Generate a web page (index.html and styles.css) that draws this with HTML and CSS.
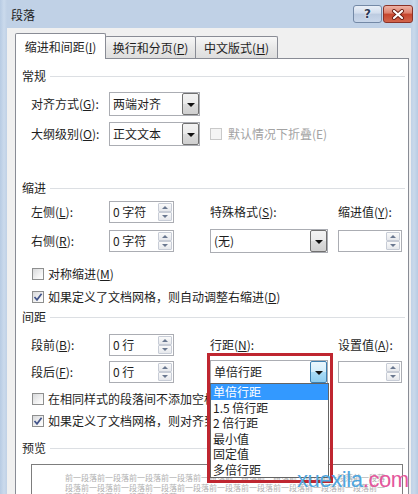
FILE: index.html
```html
<!DOCTYPE html>
<html lang="zh-CN">
<head>
<meta charset="utf-8">
<title>段落</title>
<link rel="stylesheet" href="styles.css">
</head>
<body>
<div class="window">
  <div class="titlebar">
    <span class="title">段落</span>
    <div class="tb-buttons">
      <span class="tb-btn help">?</span>
      <span class="tb-btn close">
        <svg width="14" height="11" viewBox="0 0 14 11"><path d="M3 2 L11 9 M11 2 L3 9" stroke="#6b1d12" stroke-width="4" stroke-linecap="round"/><path d="M3 2 L11 9 M11 2 L3 9" stroke="#ffffff" stroke-width="2.2" stroke-linecap="round"/></svg>
      </span>
    </div>
  </div>

  <div class="client">
    <div class="tabs">
      <div class="tab active t1">缩进和间距(<u>I</u>)</div>
      <div class="tab t2">换行和分页(<u>P</u>)</div>
      <div class="tab t3">中文版式(<u>H</u>)</div>
    </div>

    <div class="panel">
      <div class="head head-general"><span>常规</span></div>
      <div class="rows rows-general">
        <div class="row">
          <span class="lbl">对齐方式(<u>G</u>):</span>
          <div class="select sel-short"><span class="sel-text">两端对齐</span><span class="dd"><i class="arrow"></i></span></div>
        </div>
        <div class="row">
          <span class="lbl">大纲级别(<u>O</u>):</span>
          <div class="select sel-short"><span class="sel-text">正文文本</span><span class="dd"><i class="arrow"></i></span></div>
          <div class="span2 disabled"><span class="cb cb-disabled"></span><span>默认情况下折叠(E)</span></div>
        </div>
      </div>

      <div class="head head-indent"><span>缩进</span></div>
      <div class="rows rows-indent">
        <div class="row">
          <span class="lbl">左侧(<u>L</u>):</span>
          <div class="spin"><span class="spin-text">0 字符</span><span class="spin-btns"><span class="sb"><i class="up"></i></span><span class="sb"><i class="down"></i></span></span></div>
          <span class="lbl">特殊格式(<u>S</u>):</span>
          <span class="lbl">缩进值(<u>Y</u>):</span>
        </div>
        <div class="row">
          <span class="lbl">右侧(<u>R</u>):</span>
          <div class="spin"><span class="spin-text">0 字符</span><span class="spin-btns"><span class="sb"><i class="up"></i></span><span class="sb"><i class="down"></i></span></span></div>
          <div class="select sel-long"><span class="sel-text">(无)</span><span class="dd"><i class="arrow"></i></span></div>
          <div class="spin spin-wide"><span class="spin-text"></span><span class="spin-btns"><span class="sb"><i class="up"></i></span><span class="sb"><i class="down"></i></span></span></div>
        </div>
      </div>
      <div class="checks checks-indent">
        <div class="check"><span class="cb"></span><span>对称缩进(<u>M</u>)</span></div>
        <div class="check"><span class="cb cb-on"><svg width="10" height="10" viewBox="0 0 10 10"><path d="M1.5 5 L4 7.8 L8.6 1.8" fill="none" stroke="#42548a" stroke-width="1.7"/></svg></span><span>如果定义了文档网格，则自动调整右缩进(<u>D</u>)</span></div>
      </div>

      <div class="head head-spacing"><span>间距</span></div>
      <div class="rows rows-spacing">
        <div class="row">
          <span class="lbl">段前(<u>B</u>):</span>
          <div class="spin"><span class="spin-text">0 行</span><span class="spin-btns"><span class="sb"><i class="up"></i></span><span class="sb"><i class="down"></i></span></span></div>
          <span class="lbl">行距(<u>N</u>):</span>
          <span class="lbl">设置值(<u>A</u>):</span>
        </div>
        <div class="row">
          <span class="lbl">段后(<u>F</u>):</span>
          <div class="spin"><span class="spin-text">0 行</span><span class="spin-btns"><span class="sb"><i class="up"></i></span><span class="sb"><i class="down"></i></span></span></div>
          <div class="select sel-long"><span class="sel-text">单倍行距</span><span class="dd dd-hot"><i class="arrow"></i></span></div>
          <div class="spin spin-wide"><span class="spin-text"></span><span class="spin-btns"><span class="sb"><i class="up"></i></span><span class="sb"><i class="down"></i></span></span></div>
        </div>
      </div>
      <div class="checks checks-spacing">
        <div class="check"><span class="cb"></span><span>在相同样式的段落间不添加空格(<u>C</u>)</span></div>
        <div class="check"><span class="cb cb-on"><svg width="10" height="10" viewBox="0 0 10 10"><path d="M1.5 5 L4 7.8 L8.6 1.8" fill="none" stroke="#42548a" stroke-width="1.7"/></svg></span><span>如果定义了文档网格，则对齐到网格(<u>W</u>)</span></div>
      </div>

      <div class="head head-preview"><span>预览</span></div>
      <div class="preview">
        <div class="pv-line">前一段落前一段落前一段落前一段落前一段落前一段落前一段落前一段落前一段落前一段落</div>
        <div class="pv-line">段落前一段落前一段落前一段落前一段落前一段落前一段落前一段落前一段落前一段落前一</div>
        <div class="pv-line">段落前一段落前一段落前一段落</div>
      </div>
    </div>
  </div>

  <ul class="dropdown">
    <li class="sel">单倍行距</li>
    <li>1.5 倍行距</li>
    <li>2 倍行距</li>
    <li>最小值</li>
    <li>固定值</li>
    <li>多倍行距</li>
  </ul>
  <div class="highlight"></div>
  <div class="watermark"><span class="wm-blue">xuexila</span><span class="wm-pink">.com</span></div>
</div>
</body>
</html>
```

FILE: styles.css
```css
* { box-sizing: border-box; }
html, body { margin: 0; padding: 0; }
body {
  width: 418px;
  height: 494px;
  overflow: hidden;
  font-family: "Noto Sans CJK SC", "Liberation Sans", sans-serif;
  font-size: 12px;
  line-height: 16px;
  color: #1e1e1e;
}
u { text-decoration: underline; text-underline-offset: 1px; }

.window {
  position: relative;
  width: 418px;
  height: 494px;
  padding: 0 7px;
  display: flex;
  flex-direction: column;
  background: linear-gradient(90deg, #b7cbe3 0, #cbdaec 4px, #c0d1e6 7px, #c0d1e6 411px, #cad9eb 414px, #b7cbe3 418px);
}

/* title bar */
.titlebar {
  height: 28px;
  flex: none;
  display: flex;
  align-items: flex-start;
  padding-left: 4px;
  margin: 0 -2px 0 0;
}
.title { margin-top: 7px; font-size: 12px; color: #1e1e1e; }
.tb-buttons { margin-left: auto; margin-top: 5px; display: flex; gap: 1px; }
.tb-btn {
  height: 18px;
  display: flex;
  align-items: center;
  justify-content: center;
  border-radius: 3px;
}
.help {
  width: 29px;
  border: 1px solid #7489a6;
  background: linear-gradient(#e9eff7, #d2dded 45%, #bccbe0 50%, #c9d7ea);
  font-family: "DejaVu Sans", sans-serif;
  font-weight: bold;
  font-size: 12px;
  color: #2c3a57;
  text-shadow: 0 0 2px #fff, 0 0 1px #fff;
}
.close {
  width: 30px;
  border: 1px solid #8a3127;
  background: linear-gradient(#eeb3a6, #dd7f6b 45%, #c6442c 50%, #d2654c);
}

/* client */
.client {
  flex: 1;
  min-height: 0;
  overflow: hidden;
  background: #f0f0f0;
  padding: 5px 2px 0 8px;
}

.tabs { display: flex; height: 25px; position: relative; z-index: 1; }
.tab {
  height: 22px;
  margin-top: 3px;
  border: 1px solid #898c95;
  border-bottom: none;
  border-radius: 2px 2px 0 0;
  background: linear-gradient(#f7f7f7, #e8e8e8 50%, #dedede);
  text-align: center;
  line-height: 21px;
  font-size: 12px;
}
.tab + .tab { margin-left: -1px; }
.tab.active {
  height: 26px;
  margin-top: 0;
  line-height: 26px;
  background: #ffffff;
  position: relative;
  z-index: 2;
}
.t1 { width: 91px; }
.t2 { width: 91px; }
.t3 { width: 83px; }

.panel {
  height: 450px;
  background: #ffffff;
  border: 1px solid #898c95;
  padding: 0 0 0 6px;
  display: flex;
  flex-direction: column;
}

/* section headers */
.head {
  height: 16px;
  display: flex;
  align-items: center;
}
.head::after {
  content: "";
  flex: 1;
  height: 1px;
  background: #dcdfe3;
  margin: 0 3px 0 4px;
}
.head-general { margin-top: 9px; }
.head-indent { margin-top: 34px; }
.head-spacing { margin-top: 3px; }
.head-preview { margin-top: 10px; }

/* rows */
.rows { display: flex; flex-direction: column; padding-left: 9px; }
.rows-general { margin-top: 8px; gap: 6px; }
.rows-indent { margin-top: 4px; gap: 5px; }
.rows-spacing { margin-top: 8px; gap: 3px; }

.row {
  display: grid;
  grid-template-columns: 78px 101px 128px 64px;
  align-items: center;
  height: 24px;
}
.lbl { white-space: nowrap; }

/* combo box */
.select {
  height: 24px;
  border: 1px solid #abadb3;
  background: #ffffff;
  display: flex;
  align-items: stretch;
  padding-left: 3px;
}
.sel-short { width: 91px; }
.sel-long { width: 118px; }
.sel-text { flex: 1; align-self: center; white-space: nowrap; }
.dd {
  width: 17px;
  border: 1px solid #707070;
  border-radius: 2px;
  background: linear-gradient(#f3f3f3, #ebebeb 48%, #dcdcdc 52%, #cfcfcf);
  display: flex;
  align-items: center;
  justify-content: center;
}
.dd-hot {
  border-color: #3c7fb1;
  background: linear-gradient(#eaf6fd, #d3eefc 48%, #a9dbf6 52%, #8fcdf0);
}
.arrow {
  width: 0;
  height: 0;
  border-left: 4px solid transparent;
  border-right: 4px solid transparent;
  border-top: 4px solid #111111;
  margin-top: 1px;
}

/* spin box */
.spin {
  width: 65px;
  height: 22px;
  border: 1px solid #abadb3;
  background: #ffffff;
  display: flex;
  align-items: stretch;
  padding-left: 3px;
}
.spin-wide { width: 64px; }
.spin-text { flex: 1; align-self: center; white-space: nowrap; }
.spin-btns {
  width: 14px;
  margin: 1px 1px 1px 0;
  display: flex;
  flex-direction: column;
}
.sb {
  flex: 1;
  border: 1px solid #c7ccd6;
  border-radius: 1px;
  background: linear-gradient(#fafafa, #e6e8ec);
  display: flex;
  align-items: center;
  justify-content: center;
}
.up, .down { width: 0; height: 0; border-left: 3px solid transparent; border-right: 3px solid transparent; }
.up { border-bottom: 3px solid #6a7890; }
.down { border-top: 3px solid #6a7890; }

/* check boxes */
.span2 { grid-column: 3 / span 2; display: flex; align-items: center; gap: 6px; white-space: nowrap; }
.disabled { color: #a3a3a3; }
.checks { display: flex; flex-direction: column; padding-left: 10px; }
.checks-indent { margin-top: 12px; gap: 5px; }
.checks-spacing { margin-top: 6px; gap: 4px; }
.check { height: 18px; display: flex; align-items: center; gap: 4px; white-space: nowrap; }
.cb {
  width: 12px;
  height: 12px;
  flex: none;
  border: 1px solid #8e8f8f;
  background: linear-gradient(135deg, #d8d9db, #f6f6f6 70%, #ffffff);
  display: flex;
  align-items: center;
  justify-content: center;
}
.cb-disabled { border-color: #c9c9c9; background: #f4f4f4; }

/* preview */
.preview {
  margin: 8px 5px 0 9px;
  height: 60px;
  border: 1px solid #7d7d7d;
  border-bottom: none;
  padding: 8px 0 0 33px;
  overflow: hidden;
}
.pv-line {
  font-size: 8px;
  line-height: 9.5px;
  color: #b0b0b0;
  white-space: nowrap;
}

/* opened drop-down list (overlay) */
.dropdown {
  position: absolute;
  left: 210px;
  top: 383px;
  width: 119px;
  margin: 0;
  padding: 0;
  list-style: none;
  background: #ffffff;
  border: 1px solid #646464;
  z-index: 5;
}
.dropdown li {
  height: 15.5px;
  line-height: 15.5px;
  padding-left: 2px;
  white-space: nowrap;
}
.dropdown li.sel { background: #3399ff; color: #ffffff; }

/* red annotation frame */
.highlight {
  position: absolute;
  left: 207px;
  top: 353px;
  width: 126px;
  height: 130px;
  border: 3px solid #bf2630;
  z-index: 6;
}

.watermark {
  position: absolute;
  left: 297px;
  top: 468px;
  font-family: "Liberation Sans", sans-serif;
  font-size: 22px;
  line-height: 24px;
  letter-spacing: -0.4px;
  z-index: 7;
  white-space: nowrap;
}
.wm-blue { color: #4fa6de; }
.wm-pink { color: #e4579c; }
```
